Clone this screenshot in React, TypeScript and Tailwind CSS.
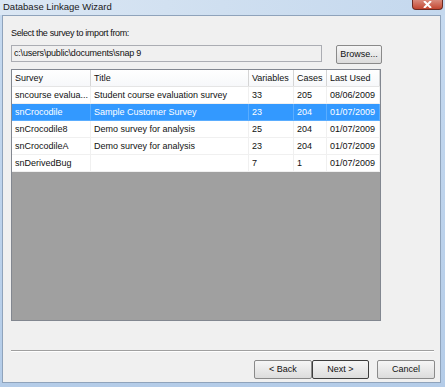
const font = { fontFamily: '"Liberation Sans", Arial, sans-serif' };

type Row = { survey: string; title: string; vars: string; cases: string; used: string; selected?: boolean };

const rows: Row[] = [
  { survey: "sncourse evalua...", title: "Student course evaluation survey", vars: "33", cases: "205", used: "08/06/2009" },
  { survey: "snCrocodile", title: "Sample Customer Survey", vars: "23", cases: "204", used: "01/07/2009", selected: true },
  { survey: "snCrocodile8", title: "Demo survey for analysis", vars: "25", cases: "204", used: "01/07/2009" },
  { survey: "snCrocodileA", title: "Demo survey for analysis", vars: "23", cases: "204", used: "01/07/2009" },
  { survey: "snDerivedBug", title: "", vars: "7", cases: "1", used: "01/07/2009" },
];

const cols = "grid grid-cols-[79px_158px_45px_33px_53px]";

function WinButton({ label, width, isDefault }: { label: string; width: string; isDefault?: boolean }) {
  return (
    <div
      className={`${width} h-[19px] flex items-center justify-center rounded-[2px] text-[9px] text-[#111] bg-gradient-to-b from-[#f6f6f6] to-[#dcdcdc] ${
        isDefault ? "border border-[#3c3c3c]" : "border border-[#8a8a8a]"
      }`}
    >
      {label}
    </div>
  );
}

export default function App() {
  return (
    <div
      className="w-[445px] h-[387px] flex flex-col bg-gradient-to-b from-[#c6daf0] to-[#b4cce8] overflow-hidden"
      style={font}
    >
      <div className="h-[15px] flex items-start justify-between shrink-0 bg-gradient-to-r from-[#dbe7f4] via-[#cfdff0] to-[#c4d8ee]">
        <span className="pl-[3px] pt-[1px] text-[9.5px] leading-[12px] text-[#1a1a1a]">Database Linkage Wizard</span>
        <div className="mr-[2px] w-[31px] h-[10px] rounded-b-[4px] border border-t-0 border-[#6b2a22] bg-gradient-to-b from-[#d98a7c] to-[#c2442f] flex items-center justify-center">
          <svg width="9" height="7" viewBox="0 0 9 7">
            <path d="M1 0 L8 7 M8 0 L1 7" stroke="white" strokeWidth="2" />
          </svg>
        </div>
      </div>

      <div className="ml-[2px] mr-[4px] mb-[4px] flex-1 flex flex-col bg-[#f0f0f0] border border-[#8fa3bb] pl-[8px] pr-[5px]">
        <div className="pt-[11px] text-[9px] leading-[12px] tracking-[-0.35px] text-[#111]">
          Select the survey to import from:
        </div>

        <div className="mt-[6px] flex">
          <div className="w-[311px] h-[17px] border border-[#abadb3] bg-[#f0f0f0] text-[9px] leading-[15px] pl-[2px] tracking-[-0.2px] text-[#111]">
            c:\users\public\documents\snap 9
          </div>
          <div className="ml-[14px]">
            <WinButton label="Browse..." width="w-[46px]" />
          </div>
        </div>

        <div className="mt-[5px] w-[370px] h-[252px] border border-[#828790] bg-[#a0a0a0] flex flex-col text-[9px] text-[#111]">
          <div className={`${cols} h-[17px] bg-white border-b border-[#e5e5e5]`}>
            {["Survey", "Title", "Variables", "Cases", "Last Used"].map((h) => (
              <div key={h} className="border-r border-[#d5d5d5] pl-[3px] leading-[16px] bg-gradient-to-b from-white to-[#f7f8fa]">
                {h}
              </div>
            ))}
          </div>
          {rows.map((r) => (
            <div
              key={r.survey}
              className={`${cols} h-[17px] ${r.selected ? "bg-[#3399ff] text-white" : "bg-white"}`}
            >
              {[r.survey, r.title, r.vars, r.cases, r.used].map((c, i) => (
                <div
                  key={i}
                  className={`pl-[3px] leading-[16px] whitespace-nowrap overflow-hidden border-b border-r ${
                    r.selected ? "border-[#5aadff]" : "border-[#f0f0f0]"
                  }`}
                >
                  {c}
                </div>
              ))}
            </div>
          ))}
        </div>

        <div className="mt-[29px] h-[2px] border-t border-[#a0a0a0] border-b border-b-white mr-[1px]" />

        <div className="mt-[8px] flex justify-end">
          <WinButton label="< Back" width="w-[58px]" />
          <WinButton label="Next >" width="w-[57px]" isDefault />
          <div className="ml-[8px]">
            <WinButton label="Cancel" width="w-[58px]" />
          </div>
        </div>
      </div>
    </div>
  );
}
